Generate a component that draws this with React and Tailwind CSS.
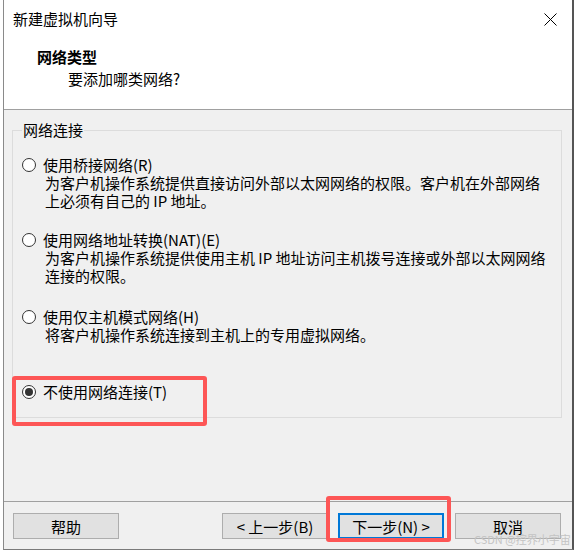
import { useState } from 'react';

const options = [
  {
    id: 'bridge',
    label: '使用桥接网络(R)',
    desc: ['为客户机操作系统提供直接访问外部以太网网络的权限。客户机在外部网络', '上必须有自己的 IP 地址。'],
    height: 'h-[75px]',
  },
  {
    id: 'nat',
    label: '使用网络地址转换(NAT)(E)',
    desc: ['为客户机操作系统提供使用主机 IP 地址访问主机拨号连接或外部以太网网络', '连接的权限。'],
    height: 'h-[77px]',
  },
  {
    id: 'host',
    label: '使用仅主机模式网络(H)',
    desc: ['将客户机操作系统连接到主机上的专用虚拟网络。'],
    height: 'h-[75px]',
  },
  {
    id: 'none',
    label: '不使用网络连接(T)',
    desc: [],
    height: 'h-[30px]',
  },
];

function Radio({ checked }) {
  return (
    <span className="w-[14px] h-[14px] rounded-full border border-[#333] bg-white flex items-center justify-center shrink-0">
      {checked && <span className="w-[8px] h-[8px] rounded-full bg-[#333]" />}
    </span>
  );
}

function Button({ children, primary, className }) {
  return (
    <button
      className={
        'w-[106px] h-[26px] bg-[#e1e1e1] text-[15px] leading-none text-black flex items-center justify-center ' +
        (primary ? 'border-2 border-[#0078d7] ' : 'border border-[#adadad] ') +
        (className || '')
      }
    >
      {children}
    </button>
  );
}

export default function App() {
  const [selected, setSelected] = useState('none');

  return (
    <div className="relative w-[574px] h-[551px] bg-white pl-[3px] font-['Noto_Sans_CJK_SC',sans-serif] text-black">
      <div className="w-[571px] h-[550px] border-l border-l-[#8a8a8a] border-r-2 border-r-[#555] border-b border-b-[#7a7a7a] flex flex-col">
        {/* title + header */}
        <div className="h-[110px] bg-white border-b border-[#a0a0a0] shrink-0">
          <div className="h-[38px] flex items-center justify-between pl-[9px] pr-[14px]">
            <span className="text-[15px] leading-[20px]">新建虚拟机向导</span>
            <svg width="13" height="13" viewBox="0 0 13 13" className="mr-[1px]">
              <path d="M0.5 0.5 L12.5 12.5 M12.5 0.5 L0.5 12.5" stroke="#000" strokeWidth="1" />
            </svg>
          </div>
          <div className="pl-[33px] pt-[9px]">
            <div className="text-[15px] leading-[20px] font-bold">网络类型</div>
            <div className="text-[15px] leading-[20px] mt-[2px] pl-[31px]">要添加哪类网络?</div>
          </div>
        </div>

        {/* body */}
        <div className="flex-1 bg-[#f0f0f0]">
          <fieldset className="ml-[8px] mt-[10px] w-[550px] h-[298px] border border-[#dcdcdc] px-[9px] pb-0 pt-0">
            <legend className="text-[15px] leading-[20px] px-[1px]">网络连接</legend>
            <div className="mt-[16px]">
              {options.map((o) => (
                <div key={o.id} className={o.height} onClick={() => setSelected(o.id)}>
                  <div className="flex items-center h-[18px]">
                    <Radio checked={selected === o.id} />
                    <span className="ml-[7px] text-[15px] leading-[18px]">{o.label}</span>
                  </div>
                  {o.desc.map((line) => (
                    <div key={line} className="pl-[23px] text-[15px] leading-[18px] whitespace-nowrap">
                      {line}
                    </div>
                  ))}
                </div>
              ))}
            </div>
          </fieldset>
        </div>

        {/* buttons */}
        <div className="h-[48px] shrink-0 bg-[#f0f0f0] border-t border-[#a0a0a0] flex items-start pt-[11px]">
          <Button className="ml-[9px]">帮助</Button>
          <div className="flex-1" />
          <Button>&lt; 上一步(B)</Button>
          <Button primary className="ml-[10px]">下一步(N) &gt;</Button>
          <Button className="ml-[11px] mr-[11px]">取消</Button>
        </div>
      </div>

      {/* annotation boxes */}
      <div className="absolute left-[12px] top-[376px] w-[195px] h-[50px] border-4 border-[#fd5656] rounded-[3px]" />
      <div className="absolute left-[326px] top-[496px] w-[125px] h-[46px] border-4 border-[#fd5656] rounded-[3px]" />

      {/* watermark */}
      <div className="absolute left-[474px] top-[532px] text-[11px] leading-[14px] text-[#c4c4c4] whitespace-nowrap">
        CSDN @控界小宇宙
      </div>
    </div>
  );
}
